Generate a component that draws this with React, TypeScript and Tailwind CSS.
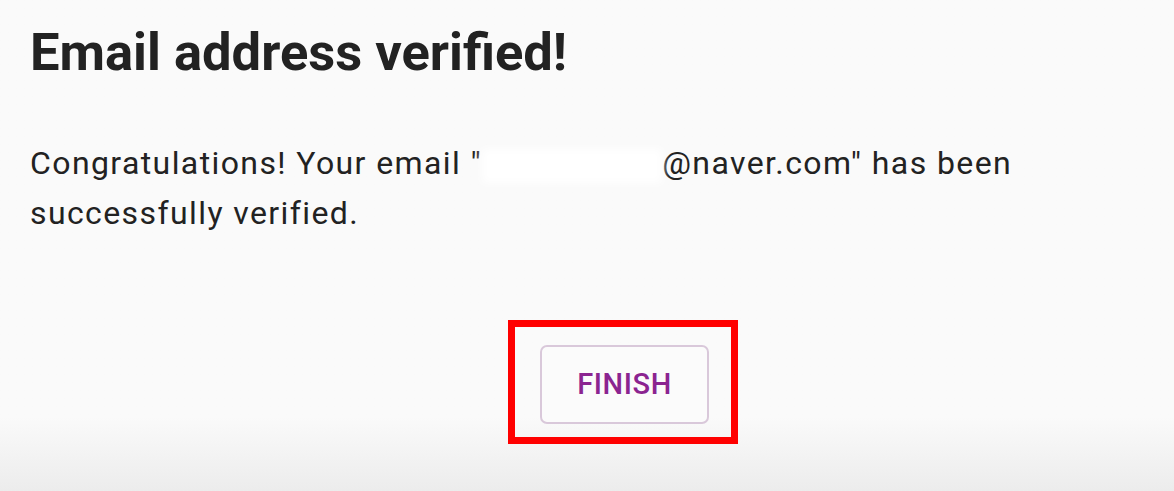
import React from 'react';

export default function App() {
  return (
    <div
      className="h-[491px] w-[1174px] overflow-hidden bg-gradient-to-b from-[#fafafa] from-85% to-[#ececec] text-[#202124]"
      style={{ fontFamily: 'Roboto, "Liberation Sans", sans-serif' }}
    >
      <div className="pl-[30px] pt-[26px]">
        <h1 className="text-[52.5px] font-bold leading-[52px] text-[#222]">Email address verified!</h1>
        <p className="mt-[60px] text-[32px] leading-[50px] tracking-[1.4px] text-[#222]">
          Congratulations! Your email "
          <span className="inline-block h-[34px] w-[180px] align-middle bg-white blur-[5px]" />
          @naver.com" has been
          <br />
          successfully verified.
        </p>
      </div>

      <div className="mt-[82px] flex pl-[508px]">
        <div className="border-[7px] border-[#ff0000] pb-[13px] pl-[25px] pr-[22px] pt-[18px]">
          <button className="flex h-[79px] w-[169px] items-center justify-center rounded-[7px] border-2 border-[#d9c8da] bg-[#fbfbfb] text-[29px] font-medium tracking-[0.6px] text-[#8b2490]">
            FINISH
          </button>
        </div>
      </div>
    </div>
  );
}
